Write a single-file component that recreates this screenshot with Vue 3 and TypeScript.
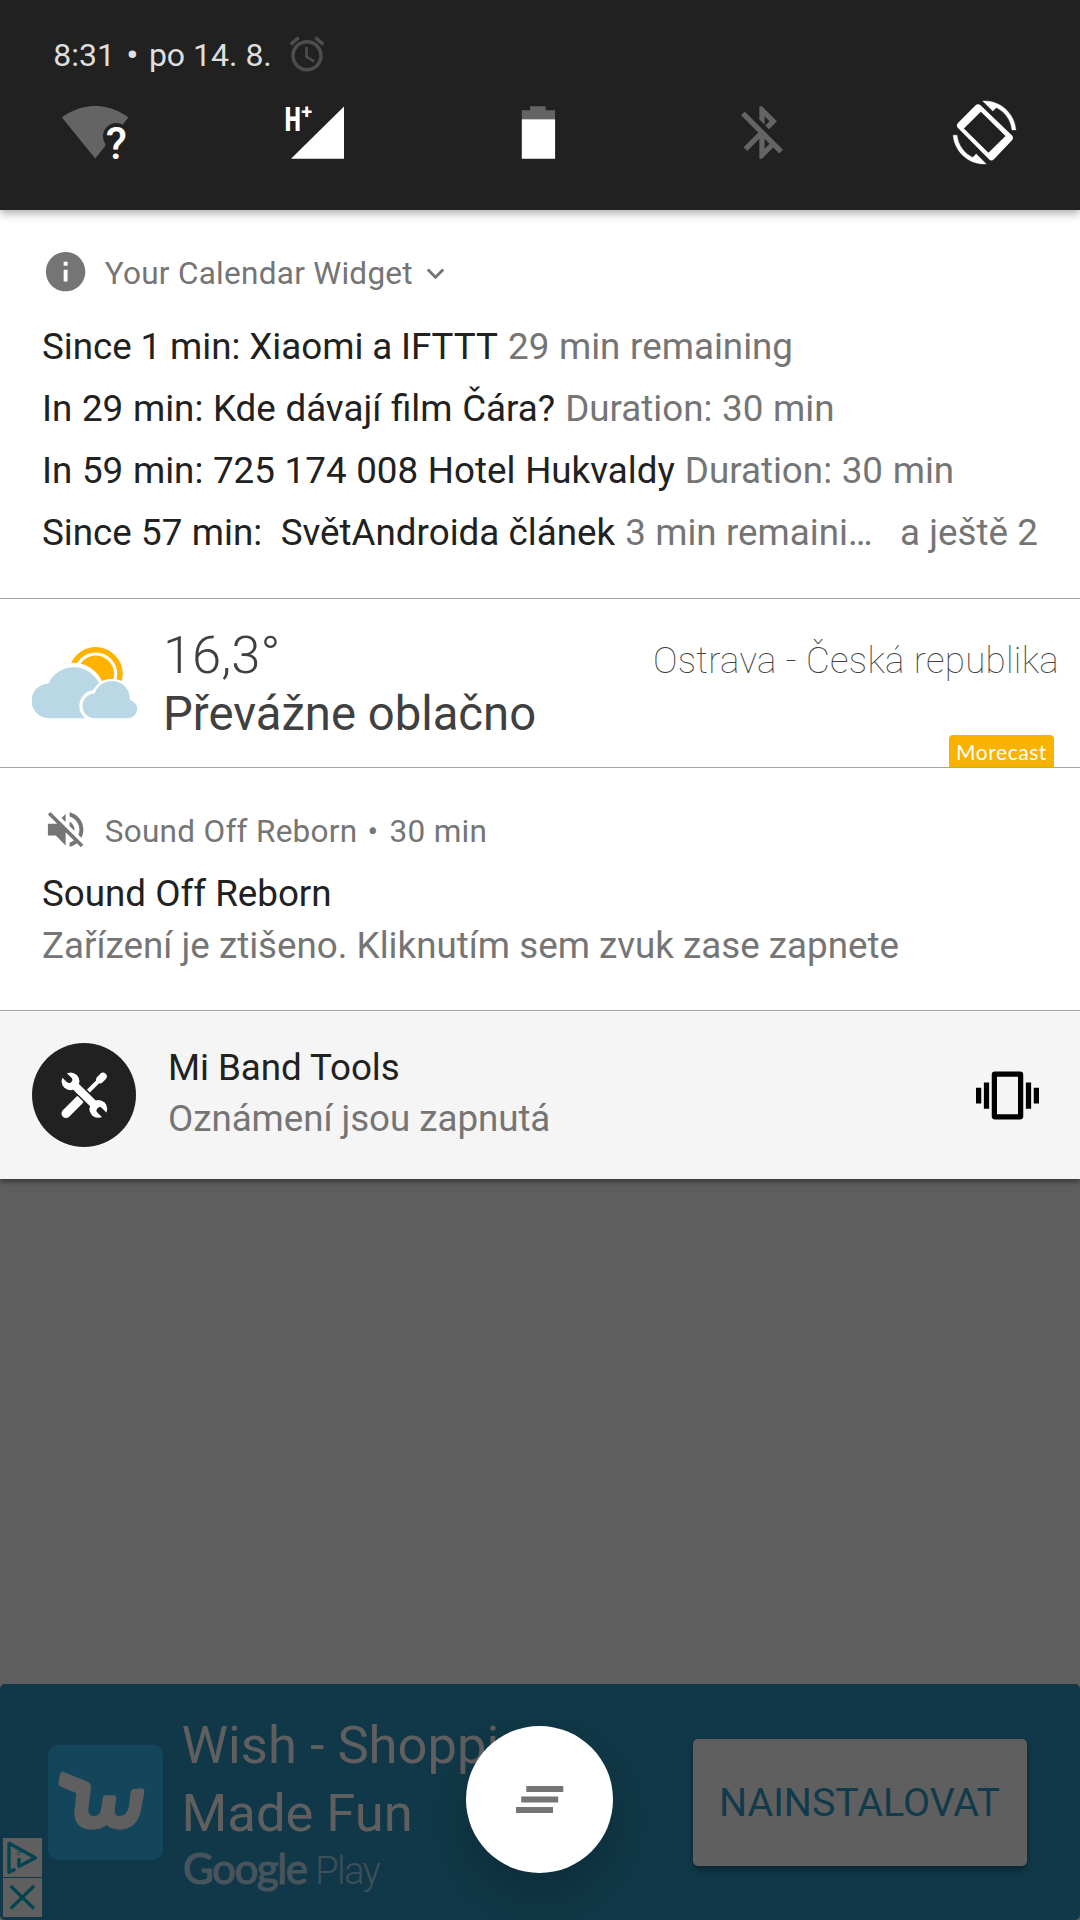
<script setup lang="ts">
interface CalendarLine {
  main: string
  extra: string
  more?: string
}

const events: CalendarLine[] = [
  { main: 'Since 1 min: Xiaomi a IFTTT', extra: '29 min remaining' },
  { main: 'In 29 min: Kde dávají film Čára?', extra: 'Duration: 30 min' },
  { main: 'In 59 min: 725 174 008 Hotel Hukvaldy', extra: 'Duration: 30 min' },
  { main: 'Since 57 min:\u00a0 SvětAndroida článek', extra: '3 min remaini…', more: 'a ještě 2' },
]
</script>

<template>
  <div class="screen">
    <header class="quick">
      <div class="clock-row">
        <span class="clock">8:31 <b class="dot">•</b> po 14. 8.</span>
        <svg class="alarm" viewBox="0 0 24 24"><path d="M22 5.72l-4.6-3.86-1.29 1.53 4.6 3.86L22 5.72zM7.88 3.39L6.6 1.86 2 5.71l1.29 1.53 4.59-3.85zM12.5 8H11v6l4.75 2.85.75-1.23-4-2.37V8zM12 4c-4.97 0-9 4.03-9 9s4.02 9 9 9c4.97 0 9-4.03 9-9s-4.03-9-9-9zm0 16c-3.87 0-7-3.13-7-7s3.13-7 7-7 7 3.13 7 7-3.13 7-7 7z" /></svg>
      </div>
      <div class="tiles">
        <svg class="tile" viewBox="63.800 101 63 63">
          <defs>
            <mask id="wifi-cut">
              <rect x="50" y="95" width="90" height="75" fill="#fff" />
              <circle cx="116" cy="136.3" r="13.2" fill="#000" />
              <rect x="105.4" y="140" width="24" height="24" fill="#000" />
            </mask>
          </defs>
          <path mask="url(#wifi-cut)" d="M95 158.5L128.2 117.5C127 116.600 114.500 106 95 106S63 116.600 61.800 117.500Z" fill="#646464" />
          <text x="105.500" y="158.700" class="glyph-q">?</text>
        </svg>
        <svg class="tile" viewBox="286 101 63 63">
          <path d="M344 106.500V158.800H291Z" fill="#fff" />
          <text transform="translate(284.700 131) scale(.68 1)" class="glyph-h">H</text>
          <text x="301.200" y="118.500" class="glyph-plus">+</text>
        </svg>
        <svg class="tile" viewBox="508.200 101 63 63">
          <path d="M530.300 106.300h15.600v4h9.400v9h-33.300v-9h8.300z" fill="#646464" />
          <path d="M522 119.300h33.300v39.400h-33.300z" fill="#fff" />
        </svg>
        <svg class="tile" viewBox=".2 0 24 24"><path fill="#646464" d="M13 5.83l1.88 1.88-1.6 1.6 1.41 1.41 3.02-3.02L12 2h-1v5.03l2 2v-3.2zM5.41 4L4 5.41 10.59 12 5 17.59 6.41 19 11 14.41V22h1l4.29-4.29 2.3 2.29L20 18.59 5.41 4zM13 18.17v-3.76l1.88 1.88L13 18.17z" /></svg>
        <svg class="tile" viewBox="0 0 24 24">
          <path fill="#fff" stroke="#fff" stroke-width=".15" d="M16.48 2.52c3.270 1.550 5.610 4.720 5.970 8.480h1.500C23.440 4.840 18.290 0 12 0l-.66.03 3.810 3.810 1.330-1.320zM7.520 21.480C4.250 19.940 1.910 16.760 1.550 13H.050C.560 19.160 5.710 24 12 24l.66-.03-3.810-3.810-1.330 1.320z" />
          <path fill="#fff" fill-rule="evenodd" d="M8.500 1.750Q9.500.800 10.500 1.600L22.400 13Q23.300 14 22.400 15L15.600 22.200Q14.600 23.100 13.700 22.200L1.900 10.300Q1 9.300 1.900 8.400ZM10.600 4.060L4.150 10.500 13.500 19.750 20 13.300Z" />
        </svg>
      </div>
    </header>

    <main class="panel">
      <section class="card calendar">
        <div class="app-row">
          <svg class="app-icon" viewBox="0 0 24 24"><path d="M12 2C6.480 2 2 6.480 2 12s4.480 10 10 10 10-4.480 10-10S17.520 2 12 2zm1 15h-2v-6h2v6zm0-8h-2V7h2v2z" /></svg>
          <span>Your Calendar Widget</span>
          <svg class="chevron" viewBox="0 0 24 24"><path d="M16.590 8.590L12 13.170 7.410 8.590 6 10l6 6 6-6z" /></svg>
        </div>
        <div class="events">
          <div v-for="e in events" :key="e.main" class="event">
            <span class="strong">{{ e.main }}</span>
            <span class="muted">{{ e.extra }}</span>
            <span v-if="e.more" class="muted more">{{ e.more }}</span>
          </div>
        </div>
      </section>

      <section class="card weather">
        <svg class="sky" viewBox="0 0 106 73">
          <circle cx="63.700" cy="28" r="24.250" fill="none" stroke="#ffb300" stroke-width="5.500" />
          <circle cx="63.700" cy="28" r="18.400" fill="#ffb300" />
          <g stroke="#fff" stroke-width="6.600" fill="#fff">
            <circle cx="41.300" cy="48" r="28" />
          </g>
          <path fill="#b9d7e4" d="M17.400 72.200A17.400 17.400 0 0 1 16.500 37.400A28 28 0 0 1 67.500 38V72.200Z" />
          <g stroke="#fff" stroke-width="6.600" fill="#fff">
            <circle cx="80" cy="54" r="18" />
            <circle cx="63" cy="59.800" r="12.400" />
            <path d="M63 72.200H96V60H63Z" />
          </g>
          <path fill="#b9d7e4" d="M63 72.200A12.400 12.400 0 0 1 62.700 47.400A18 18 0 0 1 97.800 54A9.200 9.200 0 0 1 96 72.200Z" />
        </svg>
        <div class="conditions">
          <div class="temp">16,3°</div>
          <div class="desc">Převážne oblačno</div>
        </div>
        <div class="place">
          <span class="city">Ostrava - Česká republika</span>
          <span class="badge">Morecast</span>
        </div>
      </section>

      <section class="card sound">
        <div class="app-row">
          <svg class="app-icon" viewBox="0 0 24 24"><path d="M16.500 12c0-1.770-1.020-3.290-2.500-4.030v2.210l2.450 2.450c.03-.2.05-.41.05-.63zm2.500 0c0 .94-.2 1.820-.54 2.640l1.510 1.510C20.630 14.910 21 13.500 21 12c0-4.280-2.990-7.860-7-8.770v2.060c2.890.86 5 3.540 5 6.710zM4.270 3L3 4.270 7.730 9H3v6h4l5 5v-6.730l4.250 4.250c-.67.52-1.420.93-2.250 1.180v2.060c1.380-.31 2.630-.95 3.690-1.810L19.730 21 21 19.730l-9-9L4.270 3zM12 4L9.910 6.090 12 8.180V4z" /></svg>
          <span>Sound Off Reborn <b class="sep">•</b> 30 min</span>
        </div>
        <div class="line strong">Sound Off Reborn</div>
        <div class="line muted">Zařízení je ztišeno. Kliknutím sem zvuk zase zapnete</div>
      </section>

      <section class="card band">
        <svg class="tools" viewBox="0 0 104 104">
          <circle cx="52" cy="52" r="52" fill="#212121" />
          <g fill="none" stroke="#fff" stroke-linecap="round">
            <path d="M34 70.500L47.500 57" stroke-width="9" />
            <path d="M56 48.500L66.500 38" stroke-width="4" />
            <path d="M68 36.500L71 33.500" stroke-width="7.500" />
          </g>
          <path d="M40 39.500L65 64.500" stroke="#212121" stroke-width="11" />
          <circle cx="38.500" cy="38.300" r="8.900" fill="#fff" />
          <circle cx="66.300" cy="65.900" r="8.900" fill="#fff" />
          <path d="M40 39.800L65 64.400" stroke="#fff" stroke-width="8" />
          <path d="M28.500 28.500L37 36.700M76.200 75.700L67.800 67.500" stroke="#212121" stroke-width="6.400" stroke-linecap="round" />
        </svg>
        <div class="band-text">
          <div class="strong">Mi Band Tools</div>
          <div class="muted">Oznámení jsou zapnutá</div>
        </div>
        <svg class="vibrate" viewBox="0 0 24 24"><path fill-rule="evenodd" d="M0 15h2V9H0zM3 17h2V7H3zM22 9v6h2V9zM19 17h2V7h-2zM7.200 2.900h9.600A1.200 1.200 0 0 1 18 4.100v15.800a1.200 1.200 0 0 1-1.200 1.200H7.200A1.200 1.200 0 0 1 6 19.900V4.100A1.200 1.200 0 0 1 7.200 2.900zM8 4.900v14.200h8V4.900z" /></svg>
      </section>
    </main>

    <footer class="ad">
      <svg class="wish" viewBox="143 254 345 345">
        <rect x="143" y="254" width="345" height="345" rx="30" fill="#14465b" />
        <path fill="#5f5f5f" d="M188 334L262 364Q273 369 272 382L264 448Q264 467 280 467Q298 467 302 448L307 415Q308 405 318 405L340 405Q348 406 348 415L343 448Q343 467 358 467Q380 467 386 438L391 395Q393 386 401 386L425 384Q433 386 432 394L424 440Q414 508 355 508Q330 506 318 494Q303 508 272 508Q222 506 222 456L228 398L182 379Q172 375 175 366L179 343Q182 332 188 334Z" />
      </svg>
      <div class="ad-text">
        <div class="ad-title">Wish - Shopping<br>Made Fun</div>
        <div class="store"><span class="google">Google</span><span class="play">Play</span></div>
      </div>
      <button class="install">NAINSTALOVAT</button>
      <div class="choices">
        <svg viewBox="9 537 117 117"><path d="M46 630L27 640V553L106 596L57 622V597" /><circle cx="56" cy="583" r="1" /></svg>
        <svg viewBox="9 656 117 117"><path d="M32 680L102 748M102 680L32 748" /></svg>
      </div>
      <div class="fab">
        <svg viewBox="0 0 48 28"><path d="M10.300 0h37v6h-37zM5.200 10.500h37v6H5.200zM0 21h37v6H0z" /></svg>
      </div>
    </footer>
  </div>
</template>

<style>
body {
  margin: 0;
  background: #5e5e5e;
}
</style>

<style scoped>
.screen {
  width: 1080px;
  height: 1920px;
  display: flex;
  flex-direction: column;
  background: #5e5e5e;
  font-family: Roboto, "Liberation Sans", sans-serif;
  overflow: hidden;
}

svg {
  display: block;
  flex: none;
}

.quick {
  flex: none;
  height: 210px;
  box-sizing: border-box;
  padding-top: 33px;
  background: #212121;
  box-shadow: 0 3px 9px rgba(0, 0, 0, 0.35);
  position: relative;
  z-index: 1;
}

.clock-row {
  display: flex;
  height: 42px;
  padding-left: 53.300px;
  align-items: center;
}

.clock {
  width: 233.200px;
  color: #dedede;
  font-size: 32px;
  line-height: 42px;
  white-space: nowrap;
  padding-top: 2px;
}

.dot {
  margin: 0 3px 0 3.500px;
  font-weight: 700;
}

.alarm {
  width: 42px;
  height: 42px;
  fill: #4d4d4d;
}

.tiles {
  display: flex;
  justify-content: space-between;
  padding: 0 64px 0 63.500px;
  margin-top: 26px;
}

.tile {
  width: 63px;
  height: 63px;
  overflow: visible;
}

.glyph-q {
  font-size: 43.500px;
  font-weight: 500;
  fill: #fff;
}

.glyph-h {
  font-size: 33.500px;
  font-weight: 900;
  fill: #fff;
}

.glyph-plus {
  font-size: 20px;
  font-weight: 700;
  fill: #fff;
}

.panel {
  flex: none;
  height: 969px;
  display: flex;
  flex-direction: column;
  box-shadow: 0 2px 6px rgba(0, 0, 0, 0.5);
}

.card {
  box-sizing: border-box;
  background: #fff;
  border-bottom: 1px solid #a6a6a6;
}

.calendar {
  height: 389px;
  padding: 38px 42px 0;
}

.app-row {
  display: flex;
  align-items: center;
  height: 48px;
  color: #757575;
  font-size: 31.500px;
  line-height: 48px;
  letter-spacing: 0.280px;
}

.app-row span {
  margin-left: 15.500px;
  padding-top: 3px;
}

.sep {
  margin: 0 3px 0 2px;
  font-weight: 400;
}

.app-icon {
  width: 47.250px;
  height: 47.250px;
  fill: #757575;
}

.chevron {
  width: 35px;
  height: 35px;
  margin: 3px 0 0 5px;
  fill: #757575;
}

.events {
  margin-top: 19.500px;
}

.event {
  display: flex;
  gap: 10px;
  height: 62px;
  font-size: 36.750px;
  line-height: 62px;
  word-spacing: 0.550px;
  white-space: nowrap;
}

.event:first-child .strong {
  word-spacing: -0.300px;
}

.event:last-child {
  word-spacing: 0.200px;
}

.more {
  margin-left: auto;
}

.strong {
  color: #212121;
}

.muted {
  color: #757575;
}

.weather {
  height: 169px;
  display: flex;
  padding-left: 32px;
  color: #404040;
}

.sky {
  width: 106px;
  height: 73px;
  margin-top: 47px;
}

.conditions {
  margin: 27px 0 0 25px;
}

.temp {
  height: 59px;
  font-size: 52.500px;
  font-weight: 300;
  line-height: 58px;
}

.desc {
  font-size: 47.250px;
  line-height: 58px;
}

.place {
  margin-left: auto;
  display: flex;
  flex-direction: column;
  align-items: flex-end;
  justify-content: space-between;
}

.city {
  margin: 37px 21px 0 0;
  font-size: 36.750px;
  font-weight: 100;
  line-height: 50px;
  letter-spacing: 0.270px;
}

.badge {
  width: 105px;
  height: 32px;
  margin-right: 26px;
  border-radius: 4px 4px 0 0;
  background: #f9b200;
  color: #fff;
  font: 400 21px/33px Lato, sans-serif;
  letter-spacing: 0.550px;
  text-align: center;
}

.sound {
  height: 243px;
  padding: 38px 42px 0;
}

.line {
  font-size: 36.750px;
  line-height: 52px;
}

.sound .app-row {
  margin-bottom: 14px;
}

.band {
  height: 168px;
  display: flex;
  align-items: center;
  padding: 0 41.500px 0 32px;
  background: #f5f5f5;
  border-bottom: 0;
}

.tools {
  width: 104px;
  height: 104px;
}

.band-text {
  flex: 1;
  margin-left: 32px;
  padding-bottom: 4.500px;
  font-size: 36.750px;
  line-height: 51px;
  letter-spacing: -0.060px;
}

.vibrate {
  width: 63px;
  height: 63px;
}

.ad {
  position: relative;
  flex: none;
  display: flex;
  height: 236px;
  margin-top: auto;
  padding-left: 48px;
  box-sizing: border-box;
  border-radius: 5px;
  background: #113848;
}

.wish {
  width: 115px;
  height: 115px;
  margin-top: 60.500px;
}

.ad-text {
  width: 330px;
  margin: 27px 0 0 18.500px;
  color: #5f5f5f;
  white-space: nowrap;
}

.ad-title {
  height: 135px;
  font-size: 52.500px;
  line-height: 68px;
}

.store {
  display: flex;
  align-items: baseline;
  gap: 8.500px;
  padding-left: 1.500px;
  line-height: 44px;
}

.google {
  font-family: Lato, sans-serif;
  font-size: 42px;
  font-weight: 400;
  letter-spacing: -1.400px;
  -webkit-text-stroke: 1.200px #46545c;
  color: #46545c;
}

.play {
  font-size: 38.500px;
  font-weight: 300;
  letter-spacing: -1.700px;
  color: #3d4f59;
}

.install {
  width: 334px;
  height: 127px;
  margin: 55px 0 0 181px;
  padding: 0;
  border: 0;
  border-radius: 5px;
  background: #5f5f5f;
  color: #113a4b;
  font: 400 39.400px Roboto, sans-serif;
  box-shadow: 0 4px 6px rgba(0, 0, 0, 0.35);
}

.choices {
  position: absolute;
  left: 3px;
  bottom: 3px;
  display: flex;
  flex-direction: column;
  gap: 1px;
}

.choices svg {
  width: 39px;
  height: 39px;
  background: #5f5f5f;
  fill: none;
  stroke: #024550;
  stroke-width: 10;
  stroke-linejoin: round;
}

.fab {
  position: absolute;
  left: 466px;
  top: 42px;
  width: 147px;
  height: 147px;
  display: flex;
  align-items: center;
  justify-content: center;
  border-radius: 50%;
  background: #fff;
  box-shadow: 0 22px 50px rgba(0, 0, 0, 0.2);
}

.fab svg {
  width: 48px;
  height: 28px;
  fill: #757575;
}
</style>
